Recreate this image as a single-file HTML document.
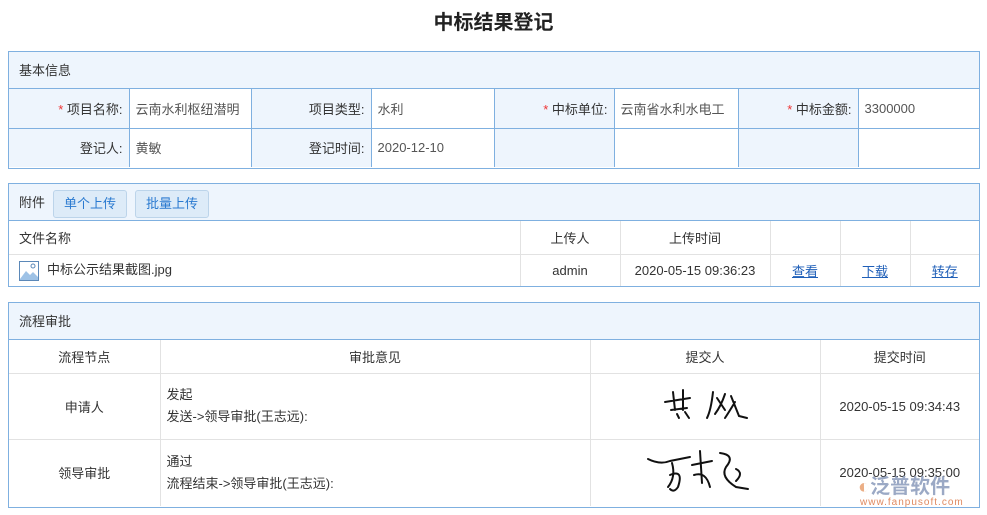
<!DOCTYPE html><html><head><meta charset="utf-8"><style>
body{margin:0;width:987px;height:515px;background:#fff;font-family:"Liberation Sans","Noto Sans CJK SC",sans-serif;font-size:13px;color:#333;position:relative;overflow:hidden}
.a{position:absolute;box-sizing:border-box}
.t{left:0;width:987px;top:6px;text-align:center;font-size:20px;font-weight:bold;color:#222}
.box{border:1px solid #7fb0e0}
.hd{background:#eef5fd;left:0;right:0;height:37px;line-height:37px;padding-left:10px;border-bottom:1px solid #7fb0e0}
table{border-collapse:collapse;position:absolute;left:0;width:100%}
td{box-sizing:border-box;padding:0 6px}
.s1 td{border:1px solid #7fb0e0;height:39px}
.s1 td.l{background:#eef5fd;text-align:right;color:#333}
.s1 td.v{color:#555}
.g td{border:1px solid #e2e2e2;text-align:center}
table tr:first-child td{border-top:none}
.g tr td:first-child{border-left:none}.g tr td:last-child{border-right:none}
.s1 tr td:first-child{border-left:none}.s1 tr td:last-child{border-right:none}.s1 tr:last-child td{border-bottom:none}
.g tr:last-child td{border-bottom:none}
.r{color:#e33}
.btn{display:inline-block;height:26px;line-height:26px;padding:0 10px;background:#ddebf8;border:1px solid #bcd4ea;border-radius:3px;color:#2a7ad0;margin-left:6px;vertical-align:middle}
a{color:#1f5fb8;text-decoration:underline}
</style></head><body>
<div class="a t">中标结果登记</div>
<div class="a box" style="left:8px;top:51px;width:972px;height:118px">
<div class="a hd" style="top:0">基本信息</div>
<table class="s1" style="top:37px">
<colgroup><col style="width:120px"><col style="width:122px"><col style="width:120px"><col style="width:123px"><col style="width:120px"><col style="width:124px"><col style="width:120px"><col></colgroup>
<tr><td class="l"><span class="r">*</span> 项目名称:</td><td class="v">云南水利枢纽潜明</td><td class="l">项目类型:</td><td class="v">水利</td><td class="l"><span class="r">*</span> 中标单位:</td><td class="v">云南省水利水电工</td><td class="l"><span class="r">*</span> 中标金额:</td><td class="v">3300000</td></tr>
<tr><td class="l">登记人:</td><td class="v">黄敏</td><td class="l">登记时间:</td><td class="v">2020-12-10</td><td class="l"></td><td></td><td class="l"></td><td></td></tr>
</table></div>
<div class="a box" style="left:8px;top:183px;width:972px;height:104px">
<div class="a hd" style="top:0;padding-left:10px">附件<span class="btn" style="margin-left:8px">单个上传</span><span class="btn" style="margin-left:8px">批量上传</span></div>
<table class="g" style="top:37px">
<colgroup><col style="width:511px"><col style="width:100px"><col style="width:150px"><col style="width:70px"><col style="width:70px"><col></colgroup>
<tr style="height:33px"><td style="text-align:left;padding-left:10px">文件名称</td><td>上传人</td><td>上传时间</td><td></td><td></td><td></td></tr>
<tr style="height:32px"><td style="text-align:left;padding-left:10px"><svg width="20" height="20" viewBox="0 0 20 20" style="vertical-align:middle;margin-right:8px"><rect x="0.5" y="0.5" width="19" height="19" fill="#fff" stroke="#5b88b8"/><path d="M1 18 L7 10 L11 14 L14 11 L19 16 L19 19 L1 19Z" fill="#9ec2e6"/><circle cx="14" cy="5" r="2" fill="none" stroke="#5b88b8"/></svg>中标公示结果截图.jpg</td><td>admin</td><td>2020-05-15 09:36:23</td><td><a>查看</a></td><td><a>下载</a></td><td><a>转存</a></td></tr>
</table></div>
<div class="a box" style="left:8px;top:302px;width:972px;height:206px">
<div class="a hd" style="top:0">流程审批</div>
<table class="g" style="top:37px">
<colgroup><col style="width:151px"><col style="width:430px"><col style="width:230px"><col></colgroup>
<tr style="height:33px"><td>流程节点</td><td>审批意见</td><td>提交人</td><td>提交时间</td></tr>
<tr style="height:66px"><td>申请人</td><td style="text-align:left;line-height:22px">发起<br>发送->领导审批(王志远):</td><td><svg width="100" height="50" viewBox="0 0 100 50" fill="none" stroke="#111" stroke-width="2" stroke-linecap="round"><path d="M10 22 L35 18 M18 12 L20 30 M28 10 L28 30 M16 30 L32 28 M22 34 L24 38 M30 32 L34 38 M58 12 Q56 30 52 38 M62 18 L70 30 M70 14 Q66 26 60 34 M76 16 L84 36 L92 38 M80 22 Q74 32 70 38"/></svg></td><td>2020-05-15 09:34:43</td></tr>
<tr style="height:67px"><td>领导审批</td><td style="text-align:left;line-height:22px">通过<br>流程结束->领导审批(王志远):</td><td><svg width="130" height="56" viewBox="0 0 130 56" fill="none" stroke="#111" stroke-width="2" stroke-linecap="round"><path d="M8 16 Q20 22 30 18 L50 14 M32 20 Q36 34 28 44 M30 32 Q44 26 38 44 Q34 50 30 46 M60 8 L62 40 M52 22 L72 18 M54 32 Q66 28 70 44 M80 10 Q96 12 86 24 Q80 34 96 44 L108 46 M96 26 Q104 30 96 38"/></svg></td><td>2020-05-15 09:35:00</td></tr>
</table></div>
<div class="a" style="left:858px;top:470px;width:125px;font-size:20px;font-weight:bold;color:#8a9bbb;opacity:.85"><span style="color:#e8a070">◐</span>泛普软件</div>
<div class="a" style="left:860px;top:497px;font-size:10px;color:#e08a60;letter-spacing:1px">www.fanpusoft.com</div>
</body></html>
